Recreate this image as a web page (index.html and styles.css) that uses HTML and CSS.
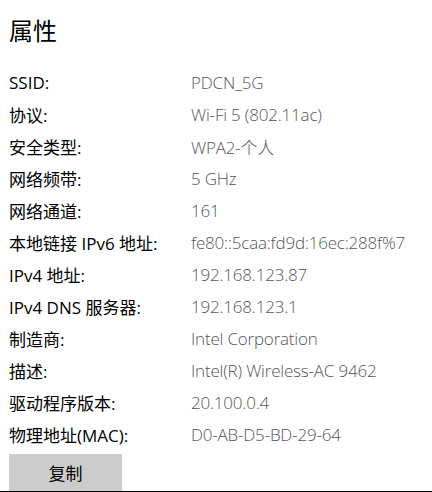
FILE: index.html
```html
<!DOCTYPE html>
<html lang="zh-CN">
<head>
<meta charset="utf-8">
<link rel="stylesheet" href="styles.css">
</head>
<body>
<div class="page">
  <h1 class="title">属性</h1>
  <dl class="props">
    <dt>SSID:</dt><dd>PDCN_5G</dd>
    <dt>协议:</dt><dd>Wi-Fi 5 (802.11ac)</dd>
    <dt>安全类型:</dt><dd>WPA2-个人</dd>
    <dt>网络频带:</dt><dd>5 GHz</dd>
    <dt>网络通道:</dt><dd>161</dd>
    <dt>本地链接 IPv6 地址:</dt><dd>fe80::5caa:fd9d:16ec:288f%7</dd>
    <dt>IPv4 地址:</dt><dd>192.168.123.87</dd>
    <dt>IPv4 DNS 服务器:</dt><dd>192.168.123.1</dd>
    <dt>制造商:</dt><dd>Intel Corporation</dd>
    <dt>描述:</dt><dd>Intel(R) Wireless-AC 9462</dd>
    <dt>驱动程序版本:</dt><dd>20.100.0.4</dd>
    <dt>物理地址(MAC):</dt><dd>D0-AB-D5-BD-29-64</dd>
  </dl>
  <button class="copy">复制</button>
</div>
<div class="bottom-line"></div>
</body>
</html>
```
FILE: styles.css
```css
html, body {
  margin: 0;
  padding: 0;
  background: #fff;
}
body {
  width: 432px;
  height: 492px;
  overflow: hidden;
  font-family: "Open Sans", "Noto Sans CJK SC", sans-serif;
  display: flex;
  flex-direction: column;
}
.page {
  flex: 1;
  padding: 0 0 0 9px;
  display: flex;
  flex-direction: column;
}
.title {
  margin: 14px 0 0 0;
  font-size: 24px;
  line-height: 32px;
  font-weight: 400;
  color: #000;
  font-family: "Noto Sans CJK SC", sans-serif;
}
.props {
  margin: 20px 0 0 0;
  display: grid;
  grid-template-columns: 182px 1fr;
  grid-auto-rows: 32px;
  align-items: center;
  font-size: 17px;
}
.props dt {
  margin: 0;
  color: #000;
  white-space: nowrap;
}
.props dd {
  margin: 0;
  color: #555;
  font-weight: 300;
  letter-spacing: -0.2px;
  white-space: nowrap;
}
.copy {
  margin-top: 4px;
  width: 113px;
  flex: 1;
  border: none;
  background: #cccccc;
  font-family: "Noto Sans CJK SC", sans-serif;
  font-size: 17px;
  color: #000;
  padding: 0;
}
.bottom-line {
  height: 1px;
  background: #000;
}
```
